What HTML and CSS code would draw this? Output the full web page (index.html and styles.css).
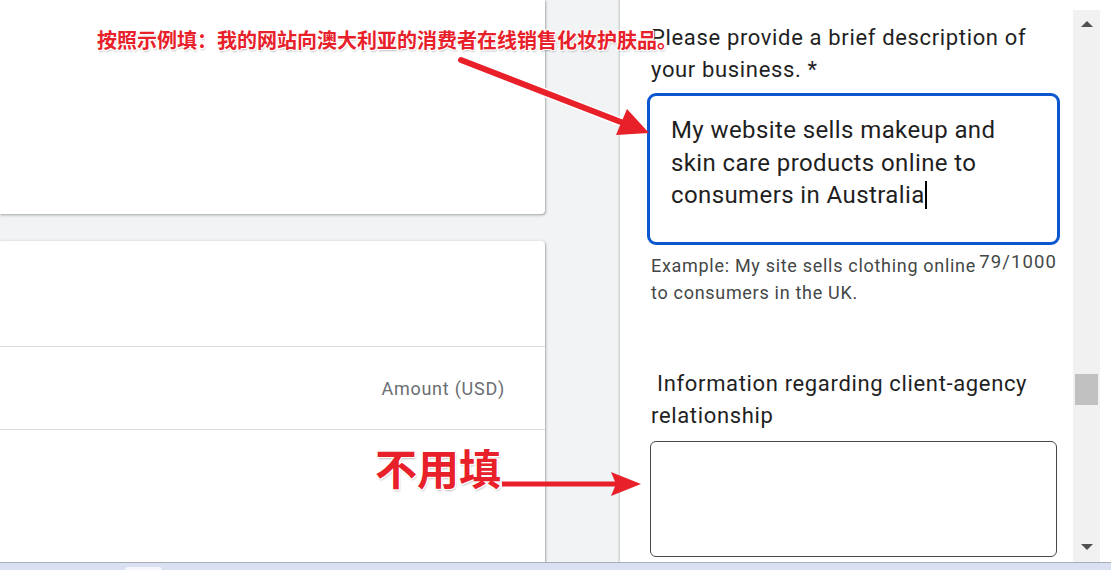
FILE: index.html
```html
<!DOCTYPE html>
<html lang="en">
<head>
<meta charset="utf-8">
<title>Form</title>
<link rel="stylesheet" href="styles.css">
</head>
<body>
<div class="screen">
  <div class="page">
    <div class="left-col">
      <div class="card card-top"></div>
      <div class="card card-bottom">
        <div class="row row-head"></div>
        <div class="row row-amount"><span class="amount">Amount (USD)</span></div>
        <div class="row row-rest"></div>
      </div>
    </div>
    <div class="gutter"></div>
    <div class="panel">
      <div class="form">
        <div class="label">Please provide a brief description of your business. *</div>
        <div class="field field-active">
          <span class="field-text">My website sells makeup and skin care products online to consumers in Australia<span class="caret"></span></span>
        </div>
        <div class="helper-row">
          <div class="helper">Example: My site sells clothing online to consumers in the UK.</div>
          <div class="counter">79/1000</div>
        </div>
        <div class="label label-second">&nbsp;Information regarding client-agency relationship</div>
        <div class="field field-empty"></div>
      </div>
    </div>
    <div class="scroll-area">
      <div class="scrollbar">
        <span class="arrow arrow-up"></span>
        <div class="track"><div class="thumb"></div></div>
        <span class="arrow arrow-down"></span>
      </div>
      <div class="scroll-edge"></div>
    </div>
  </div>
  <div class="taskbar"><span class="task-tab"></span></div>

  <div class="note note-top">按照示例填：我的网站向澳大利亚的消费者在线销售化妆护肤品。</div>
  <div class="note note-big">不用填</div>
  <svg class="arrows" width="1111" height="570" viewBox="0 0 1111 570" aria-hidden="true">
    <line x1="461" y1="60" x2="626" y2="124" stroke="#ffffff" stroke-width="9" stroke-linecap="round"/>
    <line x1="461" y1="60" x2="626" y2="124" stroke="#e8202a" stroke-width="6" stroke-linecap="round"/>
    <polygon points="649,133 616,135 627,109" fill="#e8202a"/>
    <line x1="502" y1="484" x2="616" y2="484" stroke="#e8202a" stroke-width="5"/>
    <polygon points="641,484 611,472 616,484 611,496" fill="#e8202a"/>
  </svg>
</div>
</body>
</html>
```

FILE: styles.css
```css
html, body {
  margin: 0;
  padding: 0;
}
body {
  width: 1111px;
  height: 570px;
  overflow: hidden;
  background: #f1f3f4;
  font-family: Roboto, "Liberation Sans", sans-serif;
}
.screen {
  position: relative;
  width: 1111px;
  height: 570px;
  display: flex;
  flex-direction: column;
}
.page {
  display: flex;
  height: 563px;
}
.left-col {
  width: 545px;
  display: flex;
  flex-direction: column;
  gap: 27px;
}
.card {
  background: #ffffff;
  box-shadow: 1px 1px 2px rgba(60, 64, 67, 0.3), 0 1px 3px 1px rgba(60, 64, 67, 0.12);
}
.card-top {
  height: 214px;
  border-radius: 0 0 4px 0;
}
.card-bottom {
  flex: 1;
  display: flex;
  flex-direction: column;
  border-radius: 0 4px 0 0;
}
.row-head {
  height: 105px;
  border-bottom: 1px solid #dadce0;
}
.row-amount {
  height: 82px;
  border-bottom: 1px solid #dadce0;
  display: flex;
  align-items: center;
  justify-content: flex-end;
  padding-right: 40px;
}
.amount {
  font-size: 18px;
  color: #6b6e72;
  letter-spacing: 0.75px;
}
.row-rest {
  flex: 1;
}
.gutter {
  width: 75px;
}
.panel {
  width: 453px;
  background: #ffffff;
  box-shadow: -1px 0 2px rgba(60, 64, 67, 0.25);
}
.form {
  margin-left: 27px;
  width: 413px;
  padding-top: 22px;
  display: flex;
  flex-direction: column;
}
.label {
  font-size: 22px;
  line-height: 32px;
  color: #1f1f1f;
  letter-spacing: 0.65px;
  padding: 0 6px 0 4px;
}
.field {
  box-sizing: border-box;
  background: #ffffff;
}
.field-active {
  margin-top: 7px;
  height: 152px;
  border: 3px solid #0b57d0;
  border-radius: 9px;
  padding: 18px 40px 0 21px;
}
.field-text {
  font-size: 24px;
  line-height: 32.5px;
  letter-spacing: 0.4px;
  color: #1f1f1f;
}
.caret {
  display: inline-block;
  width: 2px;
  height: 28px;
  background: #000000;
  vertical-align: -6px;
}
.helper-row {
  display: flex;
  align-items: flex-start;
  padding: 7px 3px 0 4px;
}
.helper {
  flex: 1;
  font-size: 18px;
  line-height: 27px;
  letter-spacing: 0.7px;
  color: #444746;
}
.counter {
  font-size: 18.5px;
  line-height: 20px;
  letter-spacing: 1.1px;
  color: #444746;
}
.label-second {
  margin-top: 62px;
  padding-left: 4px;
}
.field-empty {
  margin: 9px 3px 0 3px;
  height: 116px;
  border: 1px solid #474747;
  border-radius: 6px;
}
.scroll-area {
  width: 38px;
  display: flex;
  background: #ffffff;
}
.scrollbar {
  width: 27px;
  margin-top: 10px;
  background: #f1f1f1;
  display: flex;
  flex-direction: column;
  align-items: center;
}
.scroll-edge {
  flex: 1;
}
.arrow {
  width: 0;
  height: 0;
  border-left: 6px solid transparent;
  border-right: 6px solid transparent;
  margin-left: 1px;
}
.arrow-up {
  margin-top: 11px;
  border-bottom: 6px solid #505050;
}
.arrow-down {
  margin-bottom: 12px;
  border-top: 6px solid #505050;
}
.track {
  flex: 1;
  width: 100%;
  padding-top: 347px;
  box-sizing: border-box;
}
.thumb {
  margin-left: 2px;
  width: 23px;
  height: 31px;
  background: #c1c1c1;
}
.taskbar {
  height: 7px;
  border-top: 1px solid #a9adb5;
  background: #d8e0f2;
  position: relative;
}
.task-tab {
  position: absolute;
  left: 125px;
  top: 4px;
  width: 37px;
  height: 3px;
  background: #f4f6fb;
  border-radius: 3px 3px 0 0;
}
.note {
  position: absolute;
  font-family: "Noto Sans CJK SC", "Noto Sans", sans-serif;
  font-weight: 700;
  color: #e8202a;
  white-space: nowrap;
  text-shadow: 1px 0 0 #fff, -1px 0 0 #fff, 0 1px 0 #fff, 0 -1px 0 #fff,
    1px 1px 0 #fff, -1px -1px 0 #fff, 1px -1px 0 #fff, -1px 1px 0 #fff,
    1px 2px 2px rgba(0, 0, 0, 0.25);
}
.note-top {
  left: 97px;
  top: 29px;
  font-size: 20px;
  line-height: 22px;
}
.note-big {
  left: 375px;
  top: 446px;
  font-size: 42px;
  line-height: 42px;
}
.arrows {
  position: absolute;
  left: 0;
  top: 0;
  pointer-events: none;
}
```
